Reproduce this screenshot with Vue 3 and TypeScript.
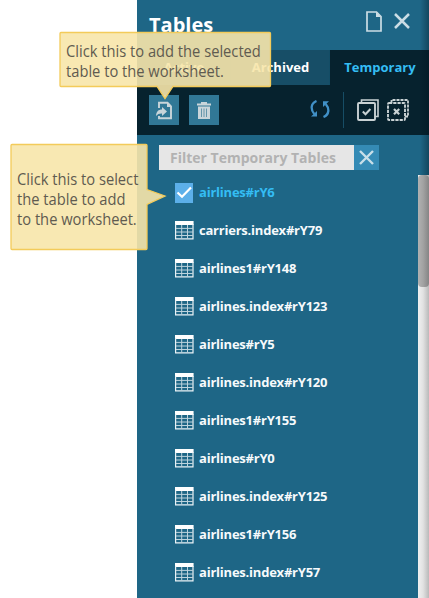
<script setup lang="ts">
import { ref } from 'vue'

interface TableEntry {
  name: string
  selected: boolean
}

const tabs = ['Active', 'Archived', 'Temporary']
const activeTab = ref('Temporary')
const filter = ref('')

const tables = ref<TableEntry[]>(
  [
    'airlines#rY6',
    'carriers.index#rY79',
    'airlines1#rY148',
    'airlines.index#rY123',
    'airlines#rY5',
    'airlines.index#rY120',
    'airlines1#rY155',
    'airlines#rY0',
    'airlines.index#rY125',
    'airlines1#rY156',
    'airlines.index#rY57',
  ].map((name, i) => ({ name, selected: i === 0 })),
)
</script>

<template>
  <div class="page">
    <section class="panel">
      <header class="header">
        <h1>Tables</h1>
        <svg class="doc" width="16" height="21" viewBox="0 0 16 21">
          <path d="M1 1H10.5L15 5.5V20H1Z" fill="none" stroke="#cbdde5" stroke-width="1.7" />
          <path d="M10 1V6H15Z" fill="#cbdde5" />
        </svg>
        <svg class="close" width="16" height="16" viewBox="0 0 16 16">
          <path d="M1 1L15 15M15 1L1 15" stroke="#cbdde5" stroke-width="2.5" />
        </svg>
      </header>

      <nav class="tabs">
        <button
          v-for="tab in tabs"
          :key="tab"
          class="tab"
          :class="{ current: tab === activeTab }"
          @click="activeTab = tab"
        >{{ tab }}</button>
      </nav>

      <div class="toolbar">
        <button class="tool">
          <svg width="30" height="30" viewBox="0 0 30 30">
            <path d="M10 13V7.8H18.5L22 11.3V23.2H10V21" fill="none" stroke="#c9d5da" stroke-width="1.9" />
            <path d="M18 7.5V12H22.5Z" fill="#c9d5da" />
            <path d="M7 21C7.3 16.5 9.5 14.5 13 14.5V12L18 16.5L13 21V18.4C10.5 18.3 8.5 19 7 21Z" fill="#c9d5da" />
          </svg>
        </button>
        <button class="tool">
          <svg width="30" height="30" viewBox="0 0 30 30">
            <path d="M8 8.5H12V7H18V8.5H22V10.5H8ZM9 11.5H21V24H9Z" fill="#c9d5da" />
            <path d="M12.5 13.5V22M15 13.5V22M17.5 13.5V22" stroke="#6495aa" stroke-width="1" />
          </svg>
        </button>
        <svg class="refresh" width="20" height="18" viewBox="0 0 20 18">
          <path d="M6.5 1C0.5 3.5 0.5 9.5 4.3 14M13.5 17C19.5 14.5 19.5 8.5 15.7 4" fill="none" stroke="#4191c7" stroke-width="2.3" />
          <path d="M1 16.5H7V11ZM13 7V1.2H19Z" fill="#4191c7" />
        </svg>
        <span class="divider"></span>
        <svg class="select" width="22" height="22" viewBox="0 0 22 22">
          <path d="M4.5 4V1H21V17.5H18" fill="none" stroke="#c9d2d4" stroke-width="1.6" />
          <rect x="1" y="4" width="17" height="17" rx="1" fill="none" stroke="#c9d2d4" stroke-width="1.9" />
          <path d="M5.8 12.5L8.5 15.2L13.4 10" fill="none" stroke="#c9d2d4" stroke-width="2" />
        </svg>
        <svg class="deselect" width="22" height="22" viewBox="0 0 22 22">
          <path d="M4.5 4V1H21V17.5H18" fill="none" stroke="#c9d2d4" stroke-width="1.8" stroke-dasharray="3 1" />
          <rect x="1" y="4" width="17" height="17" rx="1" fill="none" stroke="#c9d2d4" stroke-width="1.9" stroke-dasharray="3.2 1.05" />
          <path d="M7 10L12.2 15.2M12.2 10L7 15.2" stroke="#c9d2d4" stroke-width="2.2" />
        </svg>
      </div>

      <div class="filter">
        <input v-model="filter" placeholder="Filter Temporary Tables" />
        <button @click="filter = ''">
          <svg width="15" height="15" viewBox="0 0 15 15">
            <path d="M1 1L14 14M14 1L1 14" stroke="#c8dfe9" stroke-width="2.4" />
          </svg>
        </button>
      </div>

      <div class="body">
        <ul class="list">
          <li
            v-for="table in tables"
            :key="table.name"
            :class="{ selected: table.selected }"
            @click="table.selected = !table.selected"
          >
            <svg v-if="table.selected" class="check" width="19" height="20" viewBox="0 0 19 20">
              <rect width="18" height="20" fill="#5cafe9" />
              <path d="M2.5 9.5L7 13.7L16 4.5" fill="none" stroke="#fff" stroke-width="2.2" />
            </svg>
            <svg v-else width="19" height="20" viewBox="0 0 19 20">
              <path d="M0 1H18.6V5H0Z" fill="#fff" />
              <path d="M.6 4V18.9H18V4" fill="none" stroke="#e9f2f6" stroke-width="1.2" />
              <path d="M1 8.4H18M1 12H18M1 15.5H18M6.7 5V18.5M12.5 5V18.5" stroke="#bdd3dd" stroke-width="1" />
            </svg>
            <span>{{ table.name }}</span>
          </li>
        </ul>
        <div class="scrollbar"><div class="thumb"></div></div>
      </div>
      <div class="edge"></div>
    </section>

    <aside class="callout add">
      <svg width="213" height="69" viewBox="0 0 213 69">
        <path d="M2 1.5H210.5Q211.5 1.5 211.5 2.5V54.5Q211.5 55.5 210.5 55.5H114L106 67.5L98 55.5H2Q1 55.5 1 54.5V2.5Q1 1.5 2 1.5Z" />
      </svg>
      <p>Click this to add the selected<br />table to the worksheet.</p>
    </aside>
    <aside class="callout pick">
      <svg width="158" height="108" viewBox="0 0 158 108">
        <path d="M2 1.5H136Q137 1.5 137 2.5V46.5L155 53L137 61.5V105.5Q137 106.5 136 106.5H2Q1 106.5 1 105.5V2.5Q1 1.5 2 1.5Z" />
      </svg>
      <p>Click this to select<br />the table to add<br />to the worksheet.</p>
    </aside>
  </div>
</template>

<style>
body {
  background: #fff;
  overflow: hidden;
}
</style>

<style scoped>
.page {
  position: relative;
  width: 429px;
  height: 598px;
  overflow: hidden;
  font-family: 'Open Sans', 'Noto Sans', sans-serif;
}
.panel {
  position: relative;
  display: flex;
  flex-direction: column;
  width: 292px;
  height: 598px;
  margin-left: 137px;
  background: #1e6686;
  overflow: hidden;
}
button {
  border: 0;
  padding: 0;
  font: inherit;
}
.header {
  display: flex;
  flex: none;
  height: 50px;
  padding: 0 19px 0 12px;
}
h1 {
  flex: 1;
  margin: 11px 0 0;
  color: #fff;
  font-size: 20px;
  line-height: 28px;
  font-weight: 700;
}
.doc {
  margin: 11px 12px 0 0;
}
.close {
  margin-top: 13px;
}
.tabs {
  display: grid;
  flex: none;
  grid-template-columns: 94px 99px 99px;
  height: 35px;
}
.tab {
  padding: 0 0 2px 1px;
  background: #174e67;
  border-right: 1px solid #134d66;
  color: #fff;
  font-size: 13px;
  font-weight: 700;
}
.tab.current {
  background: #06222e;
  border: 0;
  color: #34bdf4;
}
.toolbar {
  display: flex;
  flex: none;
  height: 50px;
  padding: 10px 19px 0 12px;
  box-sizing: border-box;
  background: #06222e;
}
.toolbar svg {
  flex: none;
}
.tool {
  width: 30px;
  height: 30px;
  margin-right: 10px;
  background: #317896;
}
.tool svg {
  display: block;
}
.refresh {
  margin: 5px 13px 0 81px;
}
.divider {
  width: 1px;
  height: 36px;
  margin-top: -3px;
  background: #164d65;
}
.select {
  margin: 4px 8px 0 13px;
}
.deselect {
  margin-top: 4px;
}
.filter {
  display: flex;
  flex: none;
  height: 25px;
  margin: 10px 50px 0 22px;
}
.filter input {
  width: 195px;
  height: 25px;
  padding: 0 11px;
  box-sizing: border-box;
  border: 0;
  border-radius: 0;
  outline: 0;
  background: #e6e6e6;
  font: 700 14px 'Open Sans', sans-serif;
  letter-spacing: 0;
}
.filter input::placeholder {
  color: #b2b2b2;
}
.filter button {
  display: grid;
  place-items: center;
  width: 25px;
  background: #358bb5;
}
.body {
  display: flex;
  flex: 1;
  min-height: 0;
  padding-top: 3px;
}
.list {
  flex: 1;
  margin: 0;
  padding: 0 0 0 38px;
  list-style: none;
}
li {
  display: flex;
  align-items: center;
  gap: 5px;
  height: 38px;
  color: #f6fafc;
  font-size: 13px;
  font-weight: 700;
  letter-spacing: -0.22px;
}
li.selected {
  color: #34bdf4;
}
.check {
  margin-top: 2px;
}
.scrollbar {
  width: 11px;
  height: 423px;
  margin-top: 2px;
  background: linear-gradient(90deg, #f0f0f0, #e2e2e2 45%, #b9b9b9);
}
.thumb {
  height: 112px;
  border-radius: 4px;
  background: linear-gradient(90deg, #b1b1b1, #a3a3a3 45%, #858585);
}
.edge {
  position: absolute;
  top: 0;
  right: 0;
  width: 9px;
  height: 175px;
  background: linear-gradient(90deg, transparent, rgba(0, 20, 30, 0.38));
}
.callout {
  position: absolute;
}
.callout svg {
  display: block;
}
.callout path {
  fill: rgba(247, 229, 170, 0.9);
  stroke: #f3cb5a;
  stroke-width: 1.3;
}
.callout p {
  position: absolute;
  margin: 0;
  color: #5f5b50;
  font-size: 16px;
  line-height: 20px;
  white-space: nowrap;
  transform: scaleX(0.918);
  transform-origin: left top;
}
.add {
  left: 59px;
  top: 31px;
}
.add p {
  left: 7px;
  top: 10px;
}
.pick {
  left: 10px;
  top: 143px;
}
.pick p {
  left: 7px;
  top: 26px;
}
</style>
